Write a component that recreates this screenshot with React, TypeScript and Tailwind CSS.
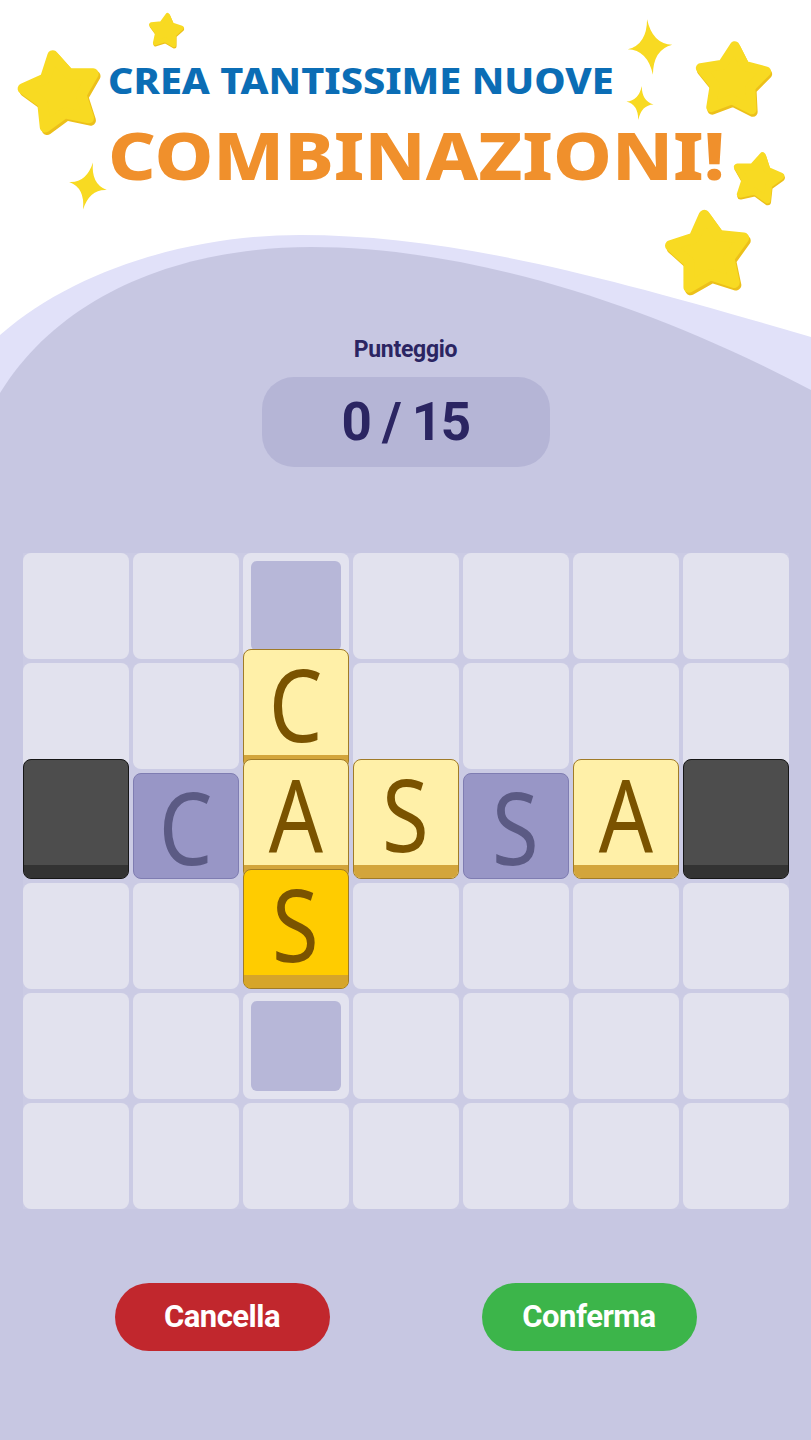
import React from 'react';

type Kind = 'empty' | 'slot' | 'yellow' | 'gold' | 'black' | 'purple';
type Cell = { kind: Kind; letter?: string };

const E: Cell = { kind: 'empty' };

const board: Cell[][] = [
  [E, E, { kind: 'slot' }, E, E, E, E],
  [E, E, { kind: 'yellow', letter: 'C' }, E, E, E, E],
  [
    { kind: 'black' },
    { kind: 'purple', letter: 'C' },
    { kind: 'yellow', letter: 'A' },
    { kind: 'yellow', letter: 'S' },
    { kind: 'purple', letter: 'S' },
    { kind: 'yellow', letter: 'A' },
    { kind: 'black' },
  ],
  [E, E, { kind: 'gold', letter: 'S' }, E, E, E, E],
  [E, E, { kind: 'slot' }, E, E, E, E],
  [E, E, E, E, E, E, E],
];

const starPoints = (() => {
  const pts: string[] = [];
  for (let i = 0; i < 10; i++) {
    const r = i % 2 === 0 ? 42 : 23;
    const a = ((-90 + i * 36) * Math.PI) / 180;
    pts.push(`${(50 + r * Math.cos(a)).toFixed(1)},${(53 + r * Math.sin(a)).toFixed(1)}`);
  }
  return pts.join(' ');
})();

const Star = ({ className }: { className: string }) => (
  <svg viewBox="0 0 100 100" className={`absolute ${className}`}>
    <polygon points={starPoints} fill="#ecc01a" stroke="#ecc01a" strokeWidth="12" strokeLinejoin="round" transform="translate(1.5 3)" />
    <polygon points={starPoints} fill="#f8da22" stroke="#f8da22" strokeWidth="12" strokeLinejoin="round" />
  </svg>
);

const Sparkle = ({ className }: { className: string }) => (
  <svg viewBox="-50 -50 100 100" className={`absolute ${className}`}>
    <path d="M0,-50 Q5,-5 40,0 Q5,5 0,50 Q-5,5 -40,0 Q-5,-5 0,-50 Z" fill="#f8da22" />
  </svg>
);

const letterCls =
  'font-["Noto_Sans",sans-serif] text-[100px] leading-[80px] font-normal scale-x-85 select-none';

const Tile = ({ cell }: { cell: Cell }) => {
  if (cell.kind === 'slot') {
    return (
      <div className="h-[106px] rounded-lg bg-[#e3e3ef] p-2">
        <div className="h-full w-full rounded-md bg-[#b7b7d8]" />
      </div>
    );
  }
  if (cell.kind === 'purple') {
    return (
      <div className="h-[106px] rounded-lg bg-[#9896c6] border border-[#7f7db2] flex items-center justify-center">
        <span className={`${letterCls} text-[#5b5a84]`}>{cell.letter}</span>
      </div>
    );
  }
  if (cell.kind === 'empty') {
    return <div className="h-[106px] rounded-lg bg-[#e2e2ee]" />;
  }
  const face =
    cell.kind === 'black' ? 'bg-[#4d4d4d]' : cell.kind === 'gold' ? 'bg-[#ffcc00]' : 'bg-[#fff0a8]';
  const lip =
    cell.kind === 'black' ? 'bg-[#333333]' : cell.kind === 'gold' ? 'bg-[#d6a52a]' : 'bg-[#d3a53b]';
  const border = cell.kind === 'black' ? 'border-[#161616]' : 'border-[#a07b28]';
  return (
    <div className="relative h-[106px]">
      <div
        className={`absolute -top-[14px] left-0 right-0 bottom-0 flex flex-col rounded-lg border ${border} ${face}`}
      >
        <div className="flex-1 flex items-center justify-center">
          {cell.letter && <span className={`${letterCls} text-[#7a5300]`}>{cell.letter}</span>}
        </div>
        <div className={`h-[13px] rounded-b-[7px] ${lip}`} />
      </div>
    </div>
  );
};

export default function App() {
  return (
    <div className="relative w-[811px] h-[1440px] overflow-hidden bg-white flex flex-col font-['Roboto',sans-serif]">
      <header className="h-[235px] pl-[108px] pt-[63px] font-['Noto_Sans',sans-serif] font-extrabold leading-none">
        <div className="text-[36px] text-[#0b6db5] origin-left scale-x-[1.1]">CREA TANTISSIME NUOVE</div>
        <div className="mt-[22px] text-[66px] text-[#f0902c] origin-left scale-x-[1.125]">COMBINAZIONI!</div>
      </header>

      <main className="relative flex-1 bg-[linear-gradient(to_bottom,transparent_159px,#c7c7e2_159px)]">
        <svg viewBox="0 0 811 160" preserveAspectRatio="none" className="absolute top-0 left-0 w-[811px] h-[160px]">
          <path d="M0,100 C80,30 200,0 300,0 C450,0 600,40 811,102 L811,160 L0,160 Z" fill="#e1e1f9" />
          <path d="M0,158 C60,60 180,12 311,12 C470,12 650,70 811,155 L811,160 L0,160 Z" fill="#c7c7e2" />
        </svg>

        <div className="relative flex flex-col items-center pt-[103px]">
          <div className="text-[23px] leading-none font-bold text-[#2b2562] tracking-[-0.3px]">Punteggio</div>
          <div className="mt-[16px] w-[288px] h-[90px] rounded-[32px] bg-[#b5b5d6] flex items-center justify-center">
            <span className="text-[53px] leading-none font-bold text-[#2b2562] tracking-[-1.5px]">0 / 15</span>
          </div>

          <div className="mt-[86px] grid grid-cols-7 gap-[4px] w-[766px] bg-[#cbcbe4]">
            {board.map((row, r) =>
              row.map((cell, c) => <Tile key={`${r}-${c}`} cell={cell} />)
            )}
          </div>

          <div className="mt-[74px] flex gap-[152px]">
            <button className="w-[215px] h-[68px] rounded-full bg-[#c1272d] text-white text-[31px] font-bold tracking-[-0.5px]">
              Cancella
            </button>
            <button className="w-[215px] h-[68px] rounded-full bg-[#3cb54a] text-white text-[31px] font-bold tracking-[-0.5px]">
              Conferma
            </button>
          </div>
        </div>
      </main>

      <Star className="left-[147px] top-[11px] w-[38px] h-[38px] rotate-6" />
      <Star className="left-[15px] top-[45px] w-[90px] h-[90px] -rotate-12" />
      <Sparkle className="left-[64px] top-[161px] w-[48px] h-[50px] rotate-12" />
      <Sparkle className="left-[622px] top-[19px] w-[56px] h-[56px] -rotate-6" />
      <Sparkle className="left-[622px] top-[86px] w-[36px] h-[34px] rotate-6" />
      <Star className="left-[692px] top-[37px] w-[82px] h-[82px] rotate-3" />
      <Star className="left-[730px] top-[149px] w-[56px] h-[56px] rotate-12" />
      <Star className="left-[662px] top-[205px] w-[92px] h-[92px] -rotate-6" />
    </div>
  );
}
